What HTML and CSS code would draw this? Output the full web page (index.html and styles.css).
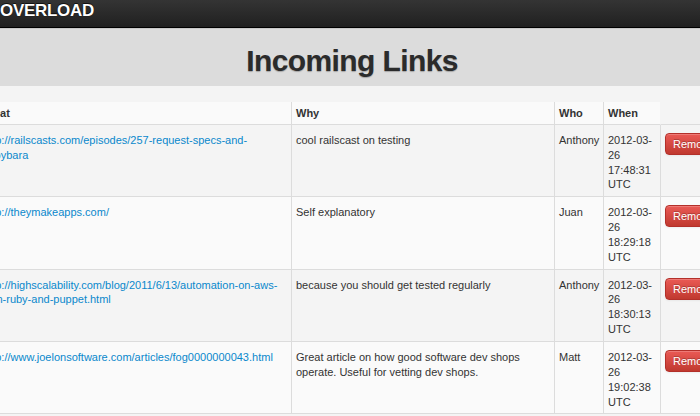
FILE: index.html
```html
<!DOCTYPE html>
<html>
<head>
<meta charset="utf-8">
<title>Incoming Links</title>
<link rel="stylesheet" href="styles.css">
</head>
<body>
<div class="navbar"><span class="brand">OVERLOAD</span></div>
<div class="hero"><h1 class="title">Incoming Links</h1></div>
<table class="links">
  <colgroup>
    <col class="c-what"><col class="c-why"><col class="c-who"><col class="c-when"><col class="c-act">
  </colgroup>
  <thead>
    <tr><th>What</th><th>Why</th><th>Who</th><th>When</th><th class="blank"></th></tr>
  </thead>
  <tbody>
    <tr>
      <td><a href="#">http://railscasts.com/episodes/257-request-specs-and-capybara</a></td>
      <td>cool railscast on testing</td>
      <td>Anthony</td>
      <td>2012-03-26 17:48:31 UTC</td>
      <td><button class="btn-danger">Remove</button></td>
    </tr>
    <tr>
      <td><a href="#">http://theymakeapps.com/</a></td>
      <td>Self explanatory</td>
      <td>Juan</td>
      <td>2012-03-26 18:29:18 UTC</td>
      <td><button class="btn-danger">Remove</button></td>
    </tr>
    <tr>
      <td><a href="#">http://highscalability.com/blog/2011/6/13/automation-on-aws-with-ruby-and-puppet.html</a></td>
      <td>because you should get tested regularly</td>
      <td>Anthony</td>
      <td>2012-03-26 18:30:13 UTC</td>
      <td><button class="btn-danger">Remove</button></td>
    </tr>
    <tr>
      <td><a href="#">http://www.joelonsoftware.com/articles/fog0000000043.html</a></td>
      <td>Great article on how good software dev shops operate. Useful for vetting dev shops.</td>
      <td>Matt</td>
      <td>2012-03-26 19:02:38 UTC</td>
      <td><button class="btn-danger">Remove</button></td>
    </tr>
  </tbody>
</table>
</body>
</html>
```
FILE: styles.css
```css
html, body {
  margin: 0;
  padding: 0;
}
body {
  background: #f4f4f4;
  font-family: "Liberation Sans", Arial, sans-serif;
  font-size: 11px;
  color: #333;
  overflow: hidden;
  width: 700px;
  height: 416px;
}
.navbar {
  height: 21px;
  padding: 0 0 6px 0;
  background: linear-gradient(#343434, #202020);
  border-bottom: 1px solid #000;
}
.brand {
  display: block;
  font-size: 17px;
  line-height: 21px;
  font-weight: bold;
  color: #fff;
  letter-spacing: -0.3px;
  text-shadow: 0 0 1px #000, 0 -1px 0 rgba(0,0,0,.6);
}
.hero {
  background: #dcdcdc;
  padding: 15px 0 7px 4px;
  box-shadow: inset 0 1px 0 #c8c8c8;
}
.title {
  margin: 0;
  text-align: center;
  font-size: 30px;
  line-height: 36px;
  font-weight: bold;
  letter-spacing: -0.6px;
  color: #2b2b2b;
  text-shadow: 0 1px 1px rgba(0,0,0,.25);
}
.links {
  margin: 16px 0 0 -22px;
  table-layout: fixed;
  width: 762px;
  border-collapse: separate;
  border-spacing: 0;
}
.c-what { width: 313px; }
.c-why { width: 263px; }
.c-who { width: 49px; }
.c-when { width: 57px; }
.c-act { width: 80px; }
.links th, .links td {
  text-align: left;
  vertical-align: top;
  line-height: 1.35;
  border-left: 1px solid #dcdcdc;
}
.links th {
  padding: 4px 4px 3px;
  font-weight: bold;
  background: #fafafa;
  border-bottom: 1px solid #dcdcdc;
}
.links th.blank {
  background: transparent;
  border-left-color: transparent;
}
.links td {
  padding: 8px 4px 4px;
  border-bottom: 1px solid #dcdcdc;
}
.links tbody tr:nth-child(odd) td { background: #f4f4f4; }
.links tbody tr:nth-child(even) td { background: #fafafa; }
.links a {
  color: #0a88cc;
  text-decoration: none;
}
.btn-danger {
  display: inline-block;
  margin: 0;
  padding: 3px 8px 3px 7px;
  font-family: "Liberation Sans", Arial, sans-serif;
  font-size: 11px;
  line-height: 14px;
  color: #fff;
  white-space: nowrap;
  text-shadow: 0 -1px 0 rgba(0,0,0,.25);
  background: linear-gradient(#ea5a55, #c0392f);
  border: 1px solid #b3302a;
  border-radius: 4px;
  box-shadow: inset 0 1px 0 rgba(255,255,255,.2), 0 1px 2px rgba(0,0,0,.05);
}
```
